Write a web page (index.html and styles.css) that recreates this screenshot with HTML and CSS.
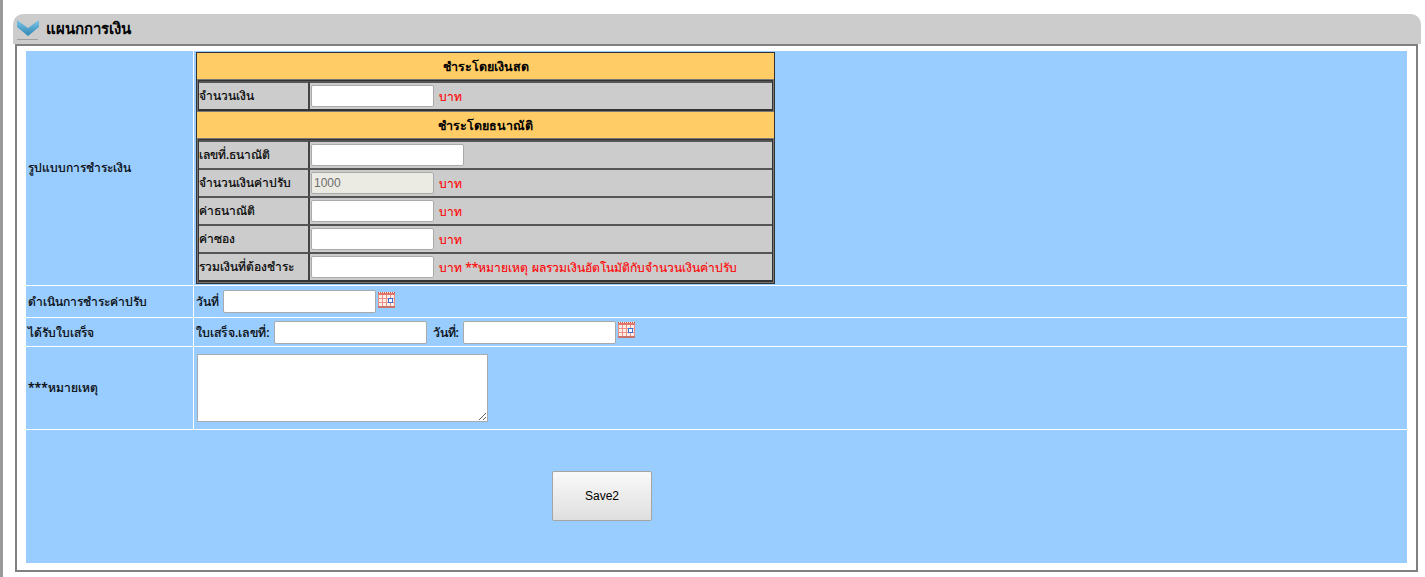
FILE: index.html
```html
<!DOCTYPE html>
<html lang="th">
<head>
<meta charset="utf-8">
<title>แผนกการเงิน</title>
<link rel="stylesheet" href="styles.css">
</head>
<body>
<div class="frame">
  <section class="panel">
    <header class="panel-head">
      <svg class="chevron" width="22" height="20" viewBox="0 0 22 20">
        <defs>
          <linearGradient id="chev" x1="0" y1="0" x2="0" y2="1">
            <stop offset="0" stop-color="#7cc6e8"/>
            <stop offset="1" stop-color="#2f86b4"/>
          </linearGradient>
        </defs>
        <path d="M0 0 L11 8 L22 0 L22 7 L11 16 L0 7 Z" fill="url(#chev)"/>
        <rect x="0" y="19" width="21" height="1" fill="#9e9e9e"/>
      </svg>
      <h1 class="panel-title">แผนกการเงิน</h1>
    </header>
    <div class="panel-body">
      <table class="form">
        <colgroup><col class="form-label-col"><col></colgroup>
        <tr class="row-pay">
          <td class="label label-tall">รูปแบบการชำระเงิน</td>
          <td class="field field-pay">
            <div class="pay">
              <div class="pay-title">ชำระโดยเงินสด</div>
              <table class="pay-table">
                <tr>
                  <th>จำนวนเงิน</th>
                  <td><div class="cell"><input class="input" type="text"><span class="unit">บาท</span></div></td>
                </tr>
              </table>
              <div class="pay-title">ชำระโดยธนาณัติ</div>
              <table class="pay-table">
                <tr>
                  <th>เลขที่.ธนาณัติ</th>
                  <td><div class="cell"><input class="input input-wide" type="text"></div></td>
                </tr>
                <tr>
                  <th>จำนวนเงินค่าปรับ</th>
                  <td><div class="cell"><input class="input input-off" type="text" value="1000" disabled><span class="unit">บาท</span></div></td>
                </tr>
                <tr>
                  <th>ค่าธนาณัติ</th>
                  <td><div class="cell"><input class="input" type="text"><span class="unit">บาท</span></div></td>
                </tr>
                <tr>
                  <th>ค่าซอง</th>
                  <td><div class="cell"><input class="input" type="text"><span class="unit">บาท</span></div></td>
                </tr>
                <tr>
                  <th>รวมเงินที่ต้องชำระ</th>
                  <td><div class="cell"><input class="input" type="text"><span class="unit">บาท **หมายเหตุ ผลรวมเงินอัตโนมัติกับจำนวนเงินค่าปรับ</span></div></td>
                </tr>
              </table>
            </div>
          </td>
        </tr>
        <tr class="row-date">
          <td class="label">ดำเนินการชำระค่าปรับ</td>
          <td class="field">
            <div class="inline">
              <span>วันที่</span>
              <input class="input input-wide" type="text">
              <svg class="cal" width="17" height="16" viewBox="0 0 17 16">
                <rect width="17" height="16" fill="#fdeeea"/>
                <path d="M0 .5H17" stroke="#c9574b" stroke-dasharray="1 1"/>
                <rect y="1" width="17" height="2" fill="#e2746a"/>
                <path d="M.5 3V15M4.500 3V15M8.500 3V15M12.500 3V15M16.500 3V15M0 6.500H17M0 10.500H17" stroke="#ec8f85"/>
                <rect x="10.500" y="6.500" width="4" height="4" fill="#fff" stroke="#3b6fd0"/>
                <rect y="14" width="17" height="2" fill="#c9736a"/>
              </svg>
            </div>
          </td>
        </tr>
        <tr class="row-receipt">
          <td class="label">ได้รับใบเสร็จ</td>
          <td class="field">
            <div class="inline inline-receipt">
              <span>ใบเสร็จ.เลขที่:</span>
              <input class="input input-wide" type="text">
              <span class="gap-label">วันที่:</span>
              <input class="input input-wide" type="text">
              <svg class="cal" width="17" height="16" viewBox="0 0 17 16">
                <rect width="17" height="16" fill="#fdeeea"/>
                <path d="M0 .5H17" stroke="#c9574b" stroke-dasharray="1 1"/>
                <rect y="1" width="17" height="2" fill="#e2746a"/>
                <path d="M.5 3V15M4.500 3V15M8.500 3V15M12.500 3V15M16.500 3V15M0 6.500H17M0 10.500H17" stroke="#ec8f85"/>
                <rect x="10.500" y="6.500" width="4" height="4" fill="#fff" stroke="#3b6fd0"/>
                <rect y="14" width="17" height="2" fill="#c9736a"/>
              </svg>
            </div>
          </td>
        </tr>
        <tr class="row-note">
          <td class="label label-tall">***หมายเหตุ</td>
          <td class="field"><textarea class="note"></textarea></td>
        </tr>
        <tr class="row-save">
          <td class="save-cell" colspan="2"><button class="save" type="button">Save2</button></td>
        </tr>
      </table>
    </div>
  </section>
</div>
</body>
</html>
```
FILE: styles.css
```css
* { box-sizing: border-box; }
html, body { margin: 0; padding: 0; background: #fff; }
body {
  font-family: Tahoma, "Noto Sans", "Liberation Sans", "Noto Sans CJK SC", sans-serif;
  font-size: 12px;
  color: #000;
  overflow: hidden;
}
.frame {
  height: 577px;
  border-left: 3px solid #999;
  padding: 14px 0 0 10px;
}
.panel { width: 1408px; }
.panel-head {
  height: 30px;
  background: #ccc;
  border-radius: 10px 10px 0 0;
  display: flex;
  align-items: flex-start;
  padding: 6px 0 0 4px;
}
.chevron { flex: none; }
.panel-title {
  margin: 0 0 0 7px;
  font-size: 15px;
  line-height: 16px;
  font-weight: bold;
}
.panel-body {
  margin: 0 2px;
  width: 1403px;
  height: 528px;
  border: 2px solid #808080;
  padding: 5px 9px 0 9px;
  background: #fff;
}
.form {
  width: 1381px;
  border-collapse: separate;
  border-spacing: 0;
  table-layout: fixed;
  background: #9cf;
}
.form-label-col { width: 168px; }
.form td { padding: 0; }
.form .label {
  border-right: 1px solid #fff;
  border-bottom: 1px solid #fff;
  padding-left: 2px;
  -webkit-text-stroke: 0.2px #000;
}
.form .label-tall { padding-bottom: 2px; }
.form .field {
  border-bottom: 1px solid #fff;
  padding-left: 2px;
  font-size: 12.1px;
  -webkit-text-stroke: 0.2px #000;
}
.row-pay { height: 235px; }
.row-date { height: 32px; }
.row-receipt { height: 29px; }
.row-note { height: 83px; }
.row-save { height: 133px; }
.form .field-pay { vertical-align: top; padding-top: 1px; font-size: 12px; }
.pay {
  width: 579px;
  height: 232px;
  border: 1px solid #333;
  background: #777;
}
.pay-title {
  height: 26px;
  background: #fc6;
  text-align: center;
  font-size: 12.500px;
  font-weight: 600;
  line-height: 28px;
  -webkit-text-stroke: 0;
}
.pay-table {
  width: 575px;
  margin: 1px;
  background: #ccc;
  border-style: solid;
  border-color: #333;
  border-width: 1px 1px 2px;
  border-collapse: separate;
  border-spacing: 0;
  table-layout: fixed;
}
.form .pay-table th {
  width: 111px;
  text-align: left;
  font-weight: normal;
  padding: 0 0 2px 0;
  border-right: 2px solid #444;
  border-top: 2px solid #555;
  height: 28px;
}
.form .pay-table td {
  padding: 0 0 0 1px;
  height: 28px;
  border-top: 2px solid #555;
  white-space: nowrap;
}
.cell { display: flex; align-items: center; gap: 5px; }
.input {
  height: 22px;
  width: 123px;
  border: 1px solid #aaa;
  border-radius: 2px;
  background: #fff;
  padding: 1px 2px;
  font: 12px "Liberation Sans", sans-serif;
  margin: 0;
  -webkit-text-stroke: 0;
}
.input-wide { width: 153px; }
.input-off { background: #ebebe4; color: #6d6d6d; }
.unit { color: #f00; font-size: 12.100px; padding-top: 1px; -webkit-text-stroke: 0.1px #f00; }
.inline { display: flex; align-items: center; gap: 4px; }
.inline-receipt { font-size: 12.280px; }
.inline .input { height: 23px; }
.gap-label { margin-left: 2px; }
.cal { flex: none; margin: 0 0 4px -2px; }
.note {
  display: block;
  margin: 7px 0 7px 1px;
  width: 291px;
  height: 68px;
  border: 1px solid #aaa;
  background: #fff;
}
.form .save-cell { padding: 0 0 1px 526px; }
.save {
  display: block;
  width: 100px;
  height: 50px;
  border: 1px solid #a5a5a5;
  border-radius: 2px;
  background: linear-gradient(#f9f9f9, #dfdfdf);
  font: 12px "Liberation Sans", sans-serif;
  color: #000;
}
```
